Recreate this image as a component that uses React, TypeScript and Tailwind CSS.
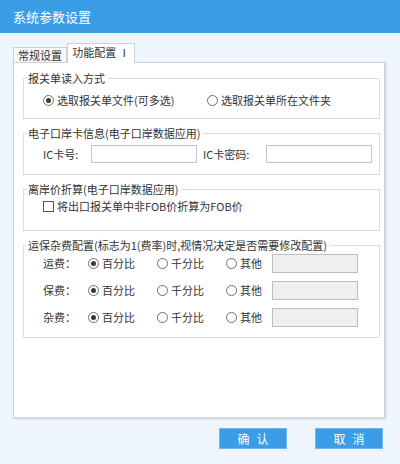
import React from 'react';

function Radio({ checked, label, className }: { checked?: boolean; label: string; className?: string }) {
  return (
    <div className={`flex items-center ${className ?? ''}`}>
      <span className="flex h-[11px] w-[11px] items-center justify-center rounded-full border border-[#6f6f6f] bg-white">
        {checked && <span className="h-[5px] w-[5px] rounded-full bg-[#3a3a3a]" />}
      </span>
      <span className="ml-[3px]">{label}</span>
    </div>
  );
}

function Group({ title, height, children }: { title: string; height: string; children: React.ReactNode }) {
  return (
    <fieldset className={`w-[357px] border border-[#dcdcdc] ${height}`}>
      <legend className="ml-[3px] px-[1px] pr-[3px] leading-[14px]">{title}</legend>
      {children}
    </fieldset>
  );
}

const fees = ['运费：', '保费：', '杂费：'];

export default function App() {
  return (
    <div className="flex h-[464px] w-[400px] flex-col bg-[#eef5fd] text-[11px] text-[#333] [font-family:'Noto_Sans_CJK_SC',sans-serif]">
      <div className="flex h-[33px] items-center bg-[#3a9de6] pl-[13px] text-[13px] text-white">
        系统参数设置
      </div>

      <div className="pl-[13px] pt-[10px]">
        <div className="flex h-[19px] items-end">
          <div className="flex h-[15px] w-[54px] items-center justify-center border border-b-0 border-[#d0d0d0] bg-[#f8f8f8] leading-none">
            常规设置
          </div>
          <div className="relative z-10 -mb-px flex h-[20px] w-[68px] items-center justify-center border border-b-0 border-[#d0d0d0] bg-white pb-[2px] leading-none">
            功能配置 Ⅰ
          </div>
        </div>

        <div className="h-[356px] w-[372px] border border-[#d0d0d0] bg-white pl-[9px] pt-[8px] shadow-[1px_1px_2px_rgba(0,0,0,0.15)]">
          <div className="flex flex-col gap-[7px]">
            <Group title="报关单读入方式" height="h-[48px]">
              <div className="flex h-[16px] items-center pl-[19px] pt-[14px]">
                <Radio checked label="选取报关单文件(可多选)" className="w-[164px]" />
                <Radio label="选取报关单所在文件夹" />
              </div>
            </Group>

            <Group title="电子口岸卡信息(电子口岸数据应用)" height="h-[49px]">
              <div className="flex items-center pl-[19px] pt-[5px]">
                <span className="w-[48px]">IC卡号:</span>
                <div className="h-[18px] w-[106px] border border-[#c4c4c4] bg-white" />
                <span className="ml-[6px] w-[63px]">IC卡密码:</span>
                <div className="h-[18px] w-[106px] border border-[#c4c4c4] bg-white" />
              </div>
            </Group>

            <Group title="离岸价折算(电子口岸数据应用)" height="h-[49px]">
              <div className="flex h-[16px] items-center pl-[19px] pt-[4px]">
                <span className="h-[11px] w-[11px] border border-[#555] bg-white" />
                <span className="ml-[3px]">将出口报关单中非FOB价折算为FOB价</span>
              </div>
            </Group>

            <Group title="运保杂费配置(标志为1(费率)时,视情况决定是否需要修改配置)" height="h-[100px]">
              <div className="flex flex-col gap-[8px] pl-[19px] pt-[2px]">
                {fees.map((f) => (
                  <div key={f} className="flex h-[19px] items-center">
                    <span className="w-[45px]">{f}</span>
                    <Radio checked label="百分比" className="w-[69px]" />
                    <Radio label="千分比" className="w-[69px]" />
                    <Radio label="其他" className="w-[46px]" />
                    <div className="h-[19px] w-[86px] border border-[#bdbdbd] bg-[#efefef]" />
                  </div>
                ))}
              </div>
            </Group>
          </div>
        </div>

        <div className="mt-[10px] flex gap-[28px] pl-[206px]">
          <button className="h-[21px] w-[68px] border border-[#6cb7ef] bg-[#3a9de6] pl-[7px] text-[12px] tracking-[7px] text-white">
            确认
          </button>
          <button className="h-[21px] w-[68px] border border-[#6cb7ef] bg-[#3a9de6] pl-[7px] text-[12px] tracking-[7px] text-white">
            取消
          </button>
        </div>
      </div>
    </div>
  );
}
